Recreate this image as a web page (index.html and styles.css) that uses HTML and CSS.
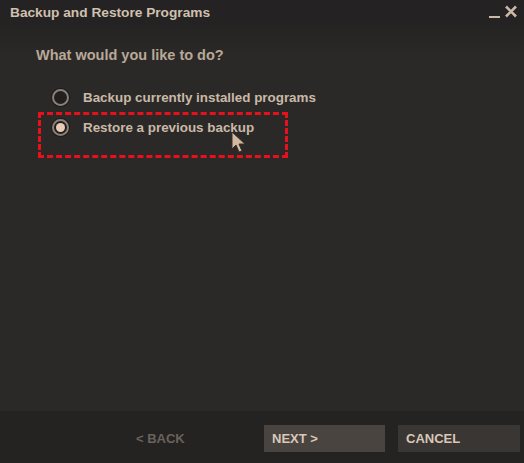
FILE: index.html
```html
<!DOCTYPE html>
<html>
<head>
<meta charset="utf-8">
<link rel="stylesheet" href="styles.css">
</head>
<body>
<div class="window">
  <div class="titlebar">
    <span class="title">Backup and Restore Programs</span>
    <div class="controls">
      <span class="min"></span>
      <svg class="close" width="14" height="13" viewBox="0 0 14 13"><path d="M2 1.5 L12 11.5 M12 1.5 L2 11.5" stroke="#c9b9a7" stroke-width="2.6" fill="none"/></svg>
    </div>
  </div>
  <div class="content">
    <div class="question">What would you like to do?</div>
    <div class="options">
      <div class="option"><span class="radio"></span><span class="label">Backup currently installed programs</span></div>
      <div class="option"><span class="radio checked"></span><span class="label">Restore a previous backup</span></div>
      <div class="highlight"></div>
      <svg class="cursor" width="18" height="24" viewBox="0 0 18 24"><path d="M1 1 L1 18 L5 14 L8 21 L11 20 L8 13 L14 13 Z" fill="#d2b9a3" stroke="#3a302a" stroke-width="1"/></svg>
    </div>
  </div>
  <div class="footer">
    <div class="btn back">&lt; BACK</div>
    <div class="btn next">NEXT &gt;</div>
    <div class="btn cancel">CANCEL</div>
  </div>
</div>
</body>
</html>
```
FILE: styles.css
```css
html, body {
  margin: 0;
  padding: 0;
  background: #282624;
}
.window {
  width: 524px;
  height: 463px;
  display: flex;
  flex-direction: column;
  background: #2a2826;
  font-family: "Liberation Sans", Arial, sans-serif;
  font-weight: bold;
  color: #c9b9a7;
}
.titlebar {
  height: 25px;
  display: flex;
  align-items: center;
  justify-content: space-between;
  padding: 0 6px 2px 10px;
  background: #242223;
}
.title {
  font-size: 13.7px;
  color: #d0c0ae;
}
.controls {
  display: flex;
  align-items: center;
  gap: 4px;
}
.min {
  width: 11px;
  height: 2px;
  background: #c9b9a7;
  margin-top: 8px;
}
.close {
  display: block;
  margin-top: -2px;
}
.content {
  flex: 1;
  padding: 19px 0 0 36px;
  background: linear-gradient(#262423, #2b2927 30px);
}
.question {
  font-size: 14.5px;
  color: #b8a898;
  height: 18px;
  line-height: 18px;
}
.options {
  position: relative;
  margin-top: 18px;
  margin-left: 16px;
}
.option {
  display: flex;
  align-items: center;
  height: 30px;
  gap: 14px;
  font-size: 13.4px;
}
.label {
  color: #c9b9a7;
}
.radio {
  width: 13px;
  height: 13px;
  border: 2px solid #8a8078;
  border-radius: 50%;
  background: #221f1e;
  position: relative;
  box-shadow: 0 0 0 1px #1c1a19;
}
.radio.checked::after {
  content: "";
  position: absolute;
  left: 2px;
  top: 2px;
  width: 9px;
  height: 9px;
  border-radius: 50%;
  background: #e8ccb4;
}
.highlight {
  position: absolute;
  left: -14px;
  top: 30px;
  width: 244px;
  height: 40px;
  border: 3px dashed #e8101a;
}
.cursor {
  position: absolute;
  left: 179px;
  top: 49px;
}
.footer {
  height: 52px;
  display: flex;
  align-items: center;
  justify-content: flex-end;
  gap: 13px;
  padding: 3px 4px 0 0;
  box-sizing: border-box;
  background: #252321;
}
.btn {
  height: 27px;
  line-height: 27px;
  font-size: 13px;
  padding-left: 8px;
  box-sizing: border-box;
}
.back {
  width: 117px;
  color: #6a625c;
  padding-left: 2px;
}
.next {
  width: 121px;
  background: #4a4440;
  color: #d8c8b8;
}
.cancel {
  width: 122px;
  background: #3a3633;
  color: #d8c8b8;
}
```
